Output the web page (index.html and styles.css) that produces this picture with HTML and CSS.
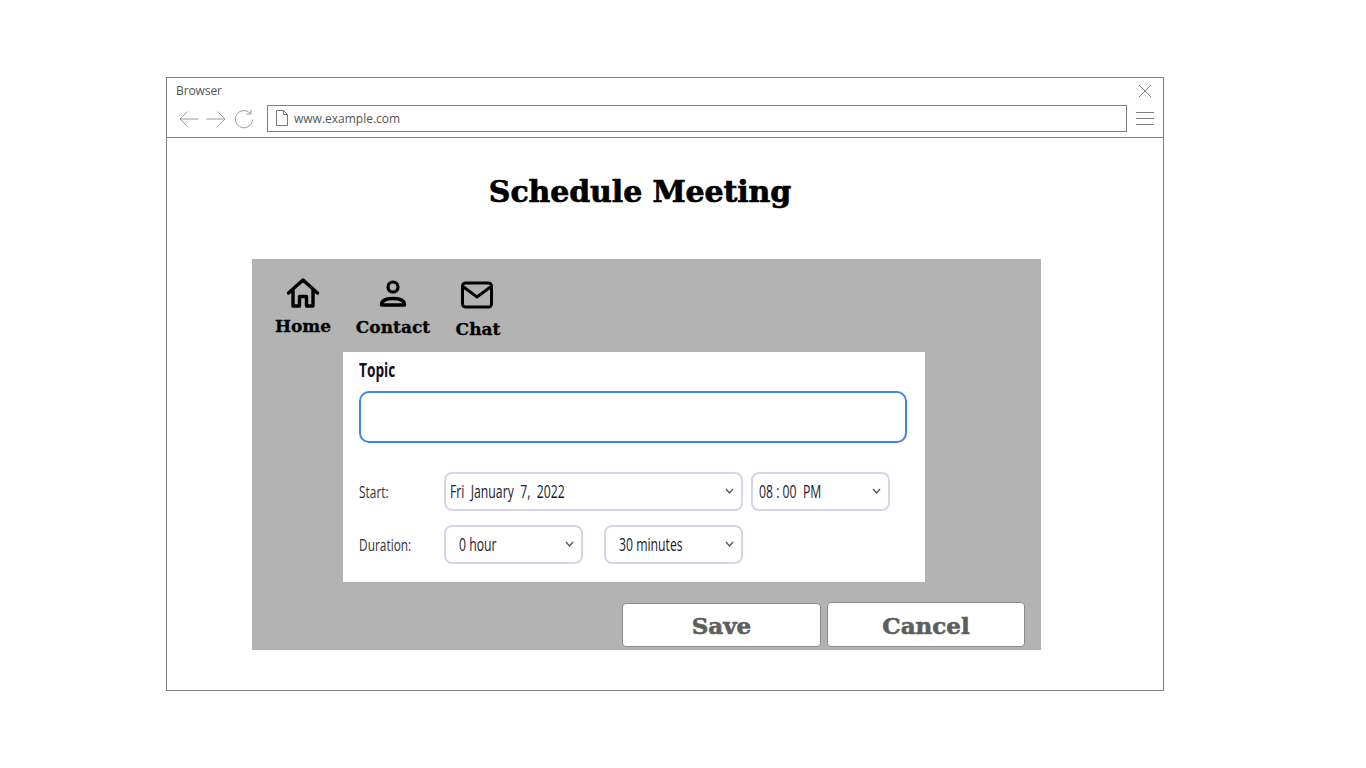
FILE: index.html
```html
<!DOCTYPE html>
<html lang="en">
<head>
  <meta charset="UTF-8" />
  <title>Schedule Meeting</title>
  <link rel="stylesheet" href="styles.css">
</head>
<body>
  <div class="window">
    <div class="titlebar">
      <span class="titlebar-label">Browser</span>
      <svg class="close-icon" width="14" height="14" viewBox="0 0 14 14"><path d="M1 1 L13 13 M13 1 L1 13" stroke="#808080" fill="none"/></svg>
    </div>
    <div class="toolbar">
      <svg class="nav-arrow" width="20" height="16" viewBox="0 0 20 16"><path d="M19.5 8 H1 M8.5 .5 L1 8 L8.5 15.5" stroke="#999" fill="none"/></svg>
      <svg class="nav-arrow" width="20" height="16" viewBox="0 0 20 16"><path d="M.5 8 H19 M11.5 .5 L19 8 L11.5 15.5" stroke="#999" fill="none"/></svg>
      <svg class="reload-icon" width="20" height="20" viewBox="0 0 20 20"><path d="M16.2 4.2 A8.6 8.6 0 1 0 18.6 10.6 M17 .8 V5 H12.6" stroke="#999" fill="none"/></svg>
      <div class="address">
        <svg width="12" height="16" viewBox="0 0 12 16"><path d="M.5 .5 H7.5 L11.5 4.5 V15.5 H.5 Z M7.5 .5 V4.5 H11.5" stroke="#777" fill="none"/></svg>
        <span>www.example.com</span>
      </div>
      <div class="menu-icon"><i></i><i></i><i></i></div>
    </div>

    <h1 class="page-title">Schedule Meeting</h1>

    <div class="panel">
      <div class="nav">
        <div class="nav-item nav-home">
          <svg width="34" height="32" viewBox="0 0 34 32"><path d="M2.5 16 L17 3 L31.5 16 M7 12.5 V29 H13.5 V19.5 H20.5 V29 H27 V12.5" stroke="#000" stroke-width="3.4" fill="none" stroke-linejoin="round" stroke-linecap="round"/></svg>
          <span>Home</span>
        </div>
        <div class="nav-item nav-contact">
          <svg width="30" height="32" viewBox="0 0 30 32"><circle cx="15" cy="9" r="5" stroke="#000" stroke-width="3.2" fill="none"/><path d="M3.5 27 C3.5 22 9 20.5 15 20.5 C21 20.5 26.5 22 26.5 27 Z" stroke="#000" stroke-width="3.4" fill="none" stroke-linejoin="round"/></svg>
          <span>Contact</span>
        </div>
        <div class="nav-item nav-chat">
          <svg width="34" height="28" viewBox="0 0 34 28"><rect x="1.5" y="2" width="29" height="24" rx="3" stroke="#000" stroke-width="3" fill="none"/><path d="M2.5 6 L16 16 L29.5 6" stroke="#000" stroke-width="3" fill="none"/></svg>
          <span>Chat</span>
        </div>
      </div>

      <div class="form">
        <div class="topic-label"><span class="narrow">Topic</span></div>
        <input class="topic-input" type="text">
        <div class="form-row row-start">
          <div class="row-label"><span class="narrow">Start:</span></div>
          <div class="select select-date"><span class="narrow">Fri&nbsp; January&nbsp; 7,&nbsp; 2022</span><svg width="9" height="6" viewBox="0 0 9 6"><path d="M1 1 L4.5 5 L8 1" stroke="#555" stroke-width="1.3" fill="none"/></svg></div>
          <div class="select select-time"><span class="narrow">08 : 00&nbsp; PM</span><svg width="9" height="6" viewBox="0 0 9 6"><path d="M1 1 L4.5 5 L8 1" stroke="#555" stroke-width="1.3" fill="none"/></svg></div>
        </div>
        <div class="form-row row-duration">
          <div class="row-label"><span class="narrow">Duration:</span></div>
          <div class="select select-hour"><span class="narrow">0 hour</span><svg width="9" height="6" viewBox="0 0 9 6"><path d="M1 1 L4.5 5 L8 1" stroke="#555" stroke-width="1.3" fill="none"/></svg></div>
          <div class="select select-minutes"><span class="narrow">30 minutes</span><svg width="9" height="6" viewBox="0 0 9 6"><path d="M1 1 L4.5 5 L8 1" stroke="#555" stroke-width="1.3" fill="none"/></svg></div>
        </div>
      </div>

      <div class="actions">
        <button class="btn btn-save">Save</button>
        <button class="btn btn-cancel">Cancel</button>
      </div>
    </div>
  </div>
</body>
</html>
```

FILE: styles.css
```css
html, body {
  margin: 0;
  height: 100%;
  background-color: #fff;
  overflow: hidden;
}

.window {
  box-sizing: border-box;
  width: 998px;
  height: 614px;
  margin: 77px 0 0 166px;
  border: 1px solid #808080;
  font-family: 'Open Sans', sans-serif;
}

.titlebar {
  display: flex;
  justify-content: space-between;
  align-items: center;
  height: 25px;
  padding: 0 11px 0 9px;
  font-size: 12px;
  letter-spacing: -0.1px;
  color: #555;
}

.toolbar {
  box-sizing: border-box;
  display: flex;
  align-items: center;
  height: 35px;
  padding: 0 0 3px 12px;
  border-bottom: 1px solid #808080;
}

.nav-arrow {
  margin-right: 7px;
}

.reload-icon {
  margin-left: 1px;
  margin-right: 13px;
}

.address {
  box-sizing: border-box;
  display: flex;
  flex-shrink: 0;
  align-items: center;
  gap: 6px;
  width: 860px;
  height: 27px;
  padding-left: 8px;
  padding-bottom: 1px;
  border: 1px solid #808080;
  font-size: 12px;
  color: #555;
}

.menu-icon {
  display: flex;
  flex-direction: column;
  gap: 5px;
  margin-left: 9px;
}

.menu-icon i {
  display: block;
  width: 18px;
  height: 1px;
  background-color: #808080;
}

.page-title {
  box-sizing: border-box;
  width: 946px;
  height: 121px;
  margin: 0;
  padding-top: 34px;
  font-family: 'DejaVu Serif', serif;
  font-size: 30px;
  line-height: 40px;
  font-weight: 900;
  letter-spacing: -0.1px;
  -webkit-text-stroke: 0.7px #000;
  text-align: center;
  color: #000;
}

.panel {
  width: 789px;
  height: 391px;
  margin-left: 85px;
  background-color: #b3b3b3;
}

.nav {
  display: flex;
  height: 93px;
  padding-left: 21px;
}

.nav-item {
  display: flex;
  flex-direction: column;
  align-items: center;
  font-family: 'DejaVu Serif', serif;
  font-weight: 700;
  font-size: 17px;
  line-height: 24px;
  -webkit-text-stroke: 0.3px #000;
  color: #000;
}

.nav-home { width: 60px; padding-top: 18px; }
.nav-home span { margin-top: 5px; }
.nav-contact { width: 78px; margin-left: 21px; padding-top: 19px; }
.nav-contact span { margin-top: 5px; }
.nav-chat { width: 50px; margin-left: 21px; padding-top: 22px; }
.nav-chat span { margin-top: 8px; }

.form {
  box-sizing: border-box;
  width: 582px;
  height: 230px;
  margin-left: 91px;
  padding: 7px 18px 0 16px;
  background-color: #fff;
}

.narrow {
  display: inline-block;
  transform: scaleX(0.68);
  transform-origin: left center;
  white-space: nowrap;
}

.topic-label {
  height: 32px;
  font-size: 19px;
  line-height: 22px;
  font-weight: 700;
  color: #14101f;
}

.topic-label .narrow {
  transform: scaleX(0.72);
}

.topic-input {
  display: block;
  box-sizing: border-box;
  width: 548px;
  height: 52px;
  border: 2px solid #3f86e8;
  border-radius: 10px;
  outline: none;
  background-color: #fff;
}

.form-row {
  display: flex;
  align-items: center;
}

.row-start { margin-top: 29px; }
.row-duration { margin-top: 14px; }

.row-label {
  width: 85px;
  padding-bottom: 1px;
  font-size: 17px;
  color: #333;
}

.row-label .narrow {
  transform: scaleX(0.7);
}

.select {
  box-sizing: border-box;
  display: flex;
  align-items: center;
  height: 39px;
  border: 2px solid #d6d6e6;
  border-radius: 8px;
  padding: 0 7px 2px 0;
  font-size: 18px;
  color: #1d1a2b;
}

.select span { flex: 1; }

.select-date { width: 299px; padding-left: 4px; }
.select-time { width: 139px; padding-left: 6px; margin-left: 8px; }
.select-hour { width: 139px; padding-left: 13px; }
.select-minutes { width: 139px; padding-left: 13px; margin-left: 21px; }

.actions {
  display: flex;
  align-items: flex-end;
  height: 68px;
  margin-left: 370px;
  gap: 6px;
}

.btn {
  box-sizing: border-box;
  border: 1px solid #8a8a8a;
  border-radius: 4px;
  background-color: #fff;
  font-family: 'DejaVu Serif', serif;
  font-weight: 700;
  font-size: 23px;
  -webkit-text-stroke: 0.6px #5e5e5e;
  color: #5e5e5e;
  padding: 1px 0 0;
  margin-bottom: 3px;
}

.btn-save { width: 199px; height: 44px; }
.btn-cancel { width: 198px; height: 45px; }
```
